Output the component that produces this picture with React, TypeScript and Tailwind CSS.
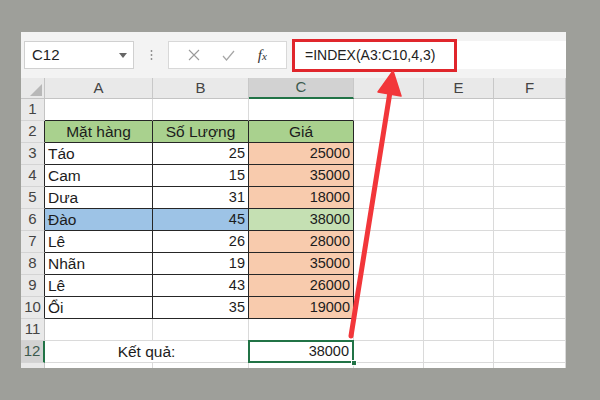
import React from "react";

const FONT = { fontFamily: '"Liberation Sans", Arial, sans-serif' };

const COLS = [
  { key: "hdr", w: "w-[24px]" },
  { key: "A", w: "w-[108px]" },
  { key: "B", w: "w-[96px]" },
  { key: "C", w: "w-[105px]" },
  { key: "D", w: "w-[70px]" },
  { key: "E", w: "w-[70px]" },
  { key: "F", w: "w-[72px]" },
];

const ITEMS: { name: string; qty: number; price: number; hl?: boolean }[] = [
  { name: "Táo", qty: 25, price: 25000 },
  { name: "Cam", qty: 15, price: 35000 },
  { name: "Dưa", qty: 31, price: 18000 },
  { name: "Đào", qty: 45, price: 38000, hl: true },
  { name: "Lê", qty: 26, price: 28000 },
  { name: "Nhãn", qty: 19, price: 35000 },
  { name: "Lê", qty: 43, price: 26000 },
  { name: "Ổi", qty: 35, price: 19000 },
];

function RowHead({ n, dark, selected }: { n?: number; dark?: boolean; selected?: boolean }) {
  return (
    <div
      className={
        "w-[24px] h-full shrink-0 flex items-center justify-center text-[15px] border-b border-b-[#d4d4d4] " +
        (selected
          ? "bg-[#d2d2d2] text-[#3c5a4e] border-r-2 border-r-[#217346]"
          : dark
          ? "bg-[#e9e9e9] text-[#444] border-r border-r-[#262626]"
          : "bg-[#e9e9e9] text-[#444] border-r border-r-[#c4c4c4]")
      }
    >
      {n}
    </div>
  );
}

function Cell({
  w,
  children,
  cls = "",
  right,
}: {
  w: string;
  children?: React.ReactNode;
  cls?: string;
  right?: boolean;
}) {
  return (
    <div
      className={
        w +
        " h-full shrink-0 flex items-center px-[3px] text-[#1c1c1c] " +
        (right ? "justify-end " : "") +
        (cls.includes("border-r-") ? "" : "border-r border-r-[#dadada] ") +
        (cls.includes("border-b-") ? "" : "border-b border-b-[#dadada] ") +
        cls
      }
    >
      {children}
    </div>
  );
}

const DK = "border-r border-r-[#262626] border-b border-b-[#262626]";

export default function App() {
  return (
    <div className="relative w-[600px] h-[400px] bg-[#9e9f9a] pt-[32px] pl-[21px]" style={FONT}>
      <div className="w-[545px] h-[336px] bg-white overflow-hidden flex flex-col">
        {/* formula bar */}
        <div className="h-[46px] shrink-0 bg-[#f3f3f3] flex items-center">
          <div className="ml-[3px] w-[110px] h-[28px] bg-white border border-[#d0d0d0] flex items-center justify-between pl-[7px] pr-[6px]">
            <span className="text-[15px] text-[#222]">C12</span>
            <svg width="8" height="5" viewBox="0 0 8 5">
              <path d="M0 0 L8 0 L4 5 Z" fill="#666" />
            </svg>
          </div>
          <div className="w-[34px] flex justify-center">
            <svg width="3" height="10" viewBox="0 0 3 10">
              <circle cx="1.5" cy="1" r="0.9" fill="#888" />
              <circle cx="1.5" cy="5" r="0.9" fill="#888" />
              <circle cx="1.5" cy="9" r="0.9" fill="#888" />
            </svg>
          </div>
          <div className="w-[119px] h-[28px] bg-white border border-[#d8d8d8] flex items-center justify-around px-[8px]">
            <svg width="12" height="12" viewBox="0 0 12 12">
              <path d="M1 1 L11 11 M11 1 L1 11" stroke="#9a9a9a" strokeWidth="1.1" />
            </svg>
            <svg width="13" height="11" viewBox="0 0 13 11">
              <path d="M1 6 L4.5 10 L12 1" stroke="#a6a6a6" strokeWidth="1.2" fill="none" />
            </svg>
            <span className="text-[15px] italic text-[#333]" style={{ fontFamily: '"Liberation Serif", serif' }}>
              f<span className="text-[11px]">x</span>
            </span>
          </div>
          <div className="ml-[5px] flex-1 h-[28px] bg-white flex items-center">
            <div className="w-[165px] h-[33px] shrink-0 border-[3px] border-[#e0262c] flex items-center pl-[10px] mt-[1px]">
              <span className="text-[14px] text-[#222]">=INDEX(A3:C10,4,3)</span>
            </div>
          </div>
        </div>

        {/* column headers */}
        <div className="h-[21px] shrink-0 flex text-[15px] text-[#444]">
          <div className="w-[24px] h-full bg-[#e9e9e9] border-r border-b border-[#c4c4c4] flex items-end justify-end p-[2px]">
            <svg width="12" height="12" viewBox="0 0 12 12">
              <path d="M12 0 L12 12 L0 12 Z" fill="#b8b8b8" />
            </svg>
          </div>
          {COLS.slice(1).map((c) => (
            <div
              key={c.key}
              className={
                c.w +
                " h-full flex items-center justify-center border-r border-r-[#c8c8c8] " +
                (c.key === "C"
                  ? "bg-[#d2d2d2] text-[#3c5a4e] border-b-2 border-b-[#217346]"
                  : "bg-[#e9e9e9] border-b border-b-[#c4c4c4]")
              }
            >
              {c.key}
            </div>
          ))}
        </div>

        {/* row 1 */}
        <div className="h-[22px] shrink-0 flex">
          <RowHead n={1} />
          <Cell w="w-[108px]" cls="border-b border-b-[#262626]" />
          <Cell w="w-[96px]" cls="border-b border-b-[#262626]" />
          <Cell w="w-[105px]" cls="border-b border-b-[#262626]" />
          <Cell w="w-[70px]" />
          <Cell w="w-[70px]" />
          <Cell w="w-[72px]" />
        </div>

        {/* row 2 header */}
        <div className="h-[22px] shrink-0 flex text-[15.5px]">
          <RowHead n={2} dark />
          <Cell w="w-[108px]" cls={DK + " justify-center bg-[#a9d18e]"}>Mặt hàng</Cell>
          <Cell w="w-[96px]" cls={DK + " justify-center bg-[#a9d18e]"}>Số Lượng</Cell>
          <Cell w="w-[105px]" cls={DK + " justify-center bg-[#a9d18e]"}>Giá</Cell>
          <Cell w="w-[70px]" />
          <Cell w="w-[70px]" />
          <Cell w="w-[72px]" />
        </div>

        {ITEMS.map((it, i) => (
          <div key={i} className="h-[22px] shrink-0 flex">
            <RowHead n={i + 3} dark />
            <Cell w="w-[108px]" cls={DK + " text-[15.5px] " + (it.hl ? "bg-[#9dc3e6]" : "")}>
              {it.name}
            </Cell>
            <Cell w="w-[96px]" right cls={DK + " text-[14.5px] " + (it.hl ? "bg-[#9dc3e6]" : "")}>
              {it.qty}
            </Cell>
            <Cell w="w-[105px]" right cls={DK + " text-[14.5px] " + (it.hl ? "bg-[#c5e0b3]" : "bg-[#f8cbad]")}>
              {it.price}
            </Cell>
            <Cell w="w-[70px]" />
            <Cell w="w-[70px]" />
            <Cell w="w-[72px]" />
          </div>
        ))}

        {/* row 11 */}
        <div className="h-[22px] shrink-0 flex">
          <RowHead n={11} />
          <Cell w="w-[108px]" />
          <Cell w="w-[96px]" />
          <Cell w="w-[105px]" />
          <Cell w="w-[70px]" />
          <Cell w="w-[70px]" />
          <Cell w="w-[72px]" />
        </div>

        {/* row 12 */}
        <div className="h-[22px] shrink-0 flex">
          <RowHead n={12} selected />
          <Cell w="w-[204px]" cls="justify-center text-[15.5px]">Kết quả:</Cell>
          <div className="relative w-[105px] h-full shrink-0 border-r border-b border-[#dadada] flex items-center justify-end px-[4px] text-[14.5px] text-[#1c1c1c]">
            38000
            <div className="absolute left-[-1px] top-[-1px] right-[-1px] bottom-[-1px] border-2 border-[#217346]" />
            <div className="absolute right-[-4px] bottom-[-4px] w-[6px] h-[6px] bg-[#217346] border border-white" />
          </div>
          <Cell w="w-[70px]" />
          <Cell w="w-[70px]" />
          <Cell w="w-[72px]" />
        </div>

        {/* row 13 (cut off by the window edge) */}
        <div className="h-[22px] shrink-0 flex">
          <RowHead />
          <Cell w="w-[108px]" />
          <Cell w="w-[96px]" />
          <Cell w="w-[105px]" />
          <Cell w="w-[70px]" />
          <Cell w="w-[70px]" />
          <Cell w="w-[72px]" />
        </div>
      </div>

      {/* annotation arrow */}
      <svg className="absolute left-0 top-0 pointer-events-none" width="600" height="400" viewBox="0 0 600 400">
        <line x1="351" y1="336" x2="390" y2="92" stroke="#f2363a" strokeWidth="5" strokeLinecap="round" />
        <polygon points="393,71 378,92 401,96" fill="#f2363a" stroke="#f2363a" strokeWidth="1.5" strokeLinejoin="round" />
      </svg>
    </div>
  );
}
